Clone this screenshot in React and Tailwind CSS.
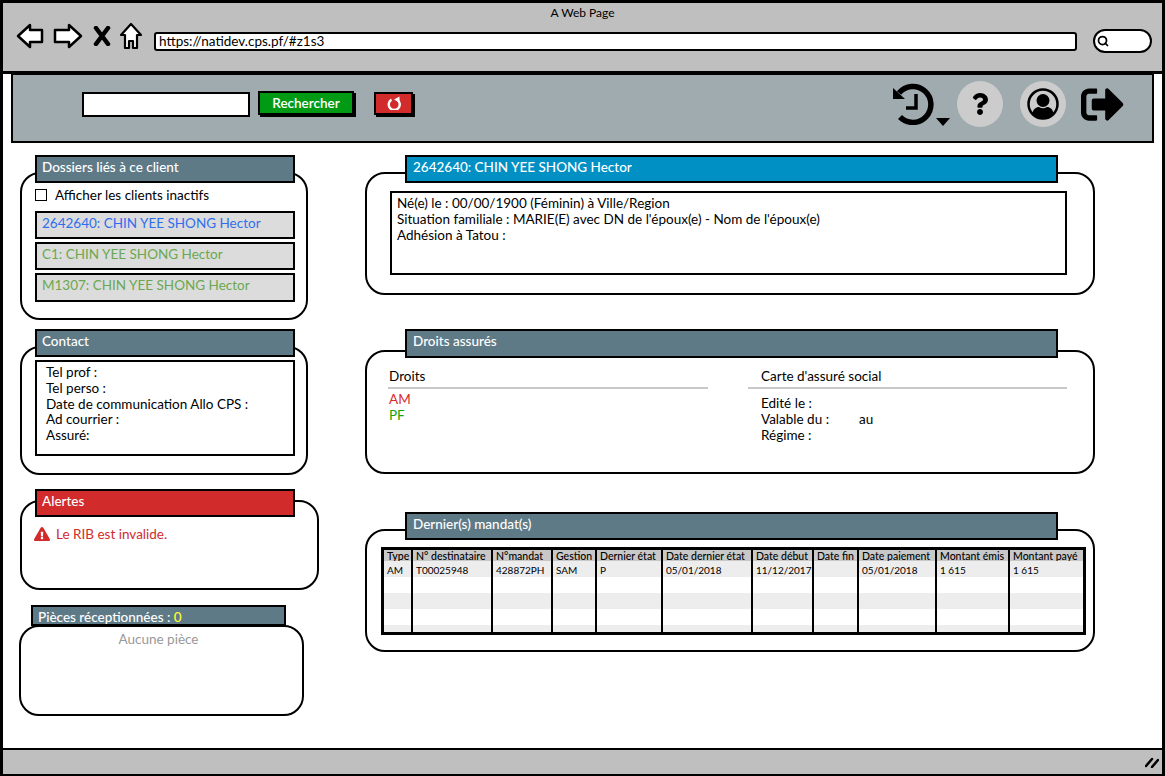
import React from 'react';
import { Search } from 'lucide-react';
import { FaQuestion, FaSignOutAlt, FaExclamationTriangle } from 'react-icons/fa';

const columns = [
  { label: 'Type', width: 'w-[28px]', value: 'AM' },
  { label: 'N° destinataire', width: 'w-[80px]', value: 'T00025948' },
  { label: 'N°mandat', width: 'w-[60px]', value: '428872PH' },
  { label: 'Gestion', width: 'w-[44px]', value: 'SAM' },
  { label: 'Dernier état', width: 'w-[66px]', value: 'P' },
  { label: 'Date dernier état', width: 'w-[90px]', value: '05/01/2018' },
  { label: 'Date début', width: 'w-[61px]', value: '11/12/2017' },
  { label: 'Date fin', width: 'w-[45px]', value: '' },
  { label: 'Date paiement', width: 'w-[78px]', value: '05/01/2018' },
  { label: 'Montant émis', width: 'w-[73px]', value: '1 615' },
  { label: 'Montant payé', width: 'w-[74px]', value: '1 615' },
];

// Header bar sitting over the top edge of a rounded panel
const PanelHeader = ({ className, children }) => (
  <div className={`relative z-10 flex items-center border-2 border-black text-white text-[13.5px] font-medium ${className}`}>
    {children}
  </div>
);

const Panel = ({ className, children }) => (
  <div className={`rounded-[20px] border-2 border-black bg-white ${className}`}>{children}</div>
);

const BrowserBar = () => (
  <div className="h-[71px] shrink-0 bg-[#bfbfbf] border-b-[3px] border-black flex flex-col">
    <div className="h-[19px] pt-[2px] text-center text-[12px] leading-[16px] text-black">A Web Page</div>
    <div className="flex items-center pl-[13px]">
      <div className="flex items-center pb-[10px]">
        <svg width="28" height="26" viewBox="0 0 28 26" className="mr-[9px]">
          <path d="M2 13 L14 2 L14 7 L26 7 L26 19 L14 19 L14 24 Z" fill="#fff" stroke="#000" strokeWidth="2.5" strokeLinejoin="round" />
        </svg>
        <svg width="30" height="26" viewBox="0 0 30 26" className="mr-[10px]">
          <path d="M28 13 L16 2 L16 7 L2 7 L2 19 L16 19 L16 24 Z" fill="#fff" stroke="#000" strokeWidth="2.5" strokeLinejoin="round" />
        </svg>
        <svg width="18" height="20" viewBox="0 0 18 20" className="mr-[8px]">
          <path d="M3 2 L15 18 M15 2 L3 18" fill="none" stroke="#000" strokeWidth="4.5" strokeLinecap="round" />
        </svg>
        <svg width="24" height="28" viewBox="0 0 24 28" className="mr-[11px]">
          <path d="M12 2 L22 13 L18 13 L18 26 L14 26 L14 19 L10 19 L10 26 L6 26 L6 13 L2 13 Z" fill="#fff" stroke="#000" strokeWidth="2.2" strokeLinejoin="round" />
        </svg>
      </div>
      <div className="w-[923px] h-[19px] bg-white border-2 border-black rounded-[3px] pl-[3px] text-[13.5px] leading-[15px] text-black">
        https://natidev.cps.pf/#z1s3
      </div>
      <div className="ml-[16px] w-[59px] h-[24px] bg-white border-2 border-black rounded-full flex items-center pl-[2px]">
        <Search className="w-[12px] h-[12px] text-black" strokeWidth={3.5} />
      </div>
    </div>
  </div>
);

const HistoryIcon = () => (
  <svg width="42" height="42" viewBox="0 0 42 42" className="mt-[2px] ml-[1px]">
    <path d="M6 10 A18 18 0 1 1 7 34" fill="none" stroke="#000" strokeWidth="5.5" />
    <path d="M0 5 L0 16 L12 16 Z" fill="#000" />
    <path d="M23 11 V25 H13" fill="none" stroke="#000" strokeWidth="3.5" />
  </svg>
);

const UserIcon = () => (
  <svg width="32" height="32" viewBox="0 0 32 32">
    <circle cx="16" cy="16" r="14.5" fill="none" stroke="#000" strokeWidth="2.5" />
    <circle cx="16" cy="12.5" r="6.5" fill="#000" />
    <path d="M5.5 26 C6 21 9 19 12 19 Q16 21.5 20 19 C23 19 26 21 26.5 26 A14 14 0 0 1 5.5 26 Z" fill="#000" />
  </svg>
);

const UndoIcon = () => (
  <svg width="14" height="14" viewBox="0 0 14 14">
    <path d="M4.5 3.6 A5.5 5.5 0 1 0 10 3.6" fill="none" stroke="#fff" strokeWidth="2.4" />
    <path d="M12.5 0.5 L12.5 6.5 L7 3.5 Z" fill="#fff" />
  </svg>
);

const Toolbar = () => (
  <div className="mx-[8px] h-[69px] shrink-0 bg-[#a0abb0] border-2 border-t-[1px] border-black flex items-center pl-[69px] pr-[28px] pb-[8px]">
    <div className="w-[168px] h-[25px] bg-white border-2 border-black" />
    <button className="ml-[8px] mb-[2px] w-[96px] h-[24px] bg-[#009a14] border-2 border-black shadow-[2px_2px_0_#000] text-white text-[13.5px] font-semibold">
      Rechercher
    </button>
    <button className="ml-[20px] mb-[2px] w-[39px] h-[23px] bg-[#d12b2b] border-2 border-black shadow-[2px_2px_0_#000] flex items-center justify-center">
      <UndoIcon />
    </button>
    <div className="ml-auto flex items-center">
      <div className="relative w-[65px] h-[46px] flex items-start">
        <HistoryIcon />
        <div className="absolute right-[7px] bottom-[1px] w-0 h-0 border-x-[7px] border-x-transparent border-t-[8px] border-t-black" />
      </div>
      <div className="w-[46px] h-[46px] rounded-full bg-[#cccccc] flex items-center justify-center">
        <FaQuestion className="w-[22px] h-[22px] text-black" />
      </div>
      <div className="ml-[17px] w-[46px] h-[46px] rounded-full bg-[#cccccc] flex items-center justify-center">
        <UserIcon />
      </div>
      <FaSignOutAlt className="ml-[15px] w-[43px] h-[43px] text-black" />
    </div>
  </div>
);

const LeftColumn = () => (
  <div className="w-[300px] shrink-0 ml-[17px] pt-[12px] flex flex-col text-[13.5px] leading-[16px] text-black">
    <PanelHeader className="ml-[15px] w-[260px] h-[28px] bg-[#5f7a87] pl-[5px] pb-[4px]">Dossiers liés à ce client</PanelHeader>
    <Panel className="-mt-[11px] w-[288px] h-[148px] pt-[9px] pl-[13px]">
      <label className="flex items-center h-[24px]">
        <span className="w-[12px] h-[12px] border border-black bg-white" />
        <span className="ml-[8px]">Afficher les clients inactifs</span>
      </label>
      <div className="mt-[4px] flex flex-col gap-[3px] w-[260px]">
        <div className="h-[28px] bg-[#dcdcdc] border-2 border-black pl-[5px] leading-[20px] text-[#2f6fed]">2642640: CHIN YEE SHONG Hector</div>
        <div className="h-[28px] bg-[#dcdcdc] border-2 border-black pl-[5px] leading-[20px] text-[#6aa84f]">C1: CHIN YEE SHONG Hector</div>
        <div className="h-[29px] bg-[#dcdcdc] border-2 border-black pl-[5px] leading-[20px] text-[#6aa84f]">M1307: CHIN YEE SHONG Hector</div>
      </div>
    </Panel>

    <PanelHeader className="mt-[9px] ml-[15px] w-[260px] h-[28px] bg-[#5f7a87] pl-[5px] pb-[4px]">Contact</PanelHeader>
    <Panel className="-mt-[11px] w-[288px] h-[129px] pt-[12px] pl-[13px]">
      <div className="w-[260px] h-[96px] border-2 border-black pl-[9px] pt-[3px] leading-[15.75px]">
        <div>Tel prof :</div>
        <div>Tel perso :</div>
        <div>Date de communication Allo CPS :</div>
        <div>Ad courrier :</div>
        <div>Assuré:</div>
      </div>
    </Panel>

    <PanelHeader className="mt-[14px] ml-[15px] w-[260px] h-[28px] bg-[#d12b2b] pl-[5px] pb-[4px]">Alertes</PanelHeader>
    <Panel className="-mt-[17px] w-[299px] h-[90px] pt-[24px] pl-[12px]">
      <div className="flex items-center text-[#d12b2b]">
        <FaExclamationTriangle className="w-[16px] h-[16px]" />
        <span className="ml-[6px]">Le RIB est invalide.</span>
      </div>
    </Panel>

    <PanelHeader className="mt-[15px] ml-[11px] w-[255px] h-[21px] bg-[#5f7a87] pl-[5px] pt-[2px]">
      <span>Pièces réceptionnées : <span className="text-[#ffff33]">0</span></span>
    </PanelHeader>
    <Panel className="-mt-[1px] -ml-[1px] w-[285px] h-[91px] pt-[4px] text-center pr-[6px] text-[#999999]">Aucune pièce</Panel>
  </div>
);

const InfoTable = () => (
  <div className="mx-[14px] mt-[16px] w-[705px] h-[88px] border-[3px] border-black overflow-hidden">
    <table className="table-fixed border-collapse w-[699px] text-[10px] text-black">
      <thead>
        <tr className="bg-[#c8c8c8] h-[11px]">
          {columns.map((col) => (
            <th key={col.label} className={`${col.width} p-0 pl-[3px] pt-[1px] text-[10.5px] font-medium text-left whitespace-nowrap overflow-hidden border-l-2 first:border-l-0 border-black leading-[10px]`}>
              {col.label}
            </th>
          ))}
        </tr>
      </thead>
      <tbody>
        <tr className="bg-[#ededed] h-[16px]">
          {columns.map((col) => (
            <td key={col.label} className="pl-[3px] pt-[2px] leading-[14px] border-l-2 first:border-l-0 border-black whitespace-nowrap">{col.value}</td>
          ))}
        </tr>
        {['bg-white', 'bg-[#ededed]', 'bg-white', 'bg-[#ededed]'].map((bg, i) => (
          <tr key={i} className={`${bg} h-[16px]`}>
            {columns.map((col) => (
              <td key={col.label} className="border-l-2 first:border-l-0 border-black" />
            ))}
          </tr>
        ))}
      </tbody>
    </table>
  </div>
);

const RightColumn = () => (
  <div className="w-[730px] ml-[45px] pt-[12px] flex flex-col text-[13.5px] leading-[16px] text-black">
    <PanelHeader className="ml-[40px] w-[653px] h-[28px] bg-[#0090c4] pl-[6px] pb-[4px]">2642640: CHIN YEE SHONG Hector</PanelHeader>
    <Panel className="-mt-[11px] h-[123px] pt-[17px] pl-[23px]">
      <div className="w-[677px] h-[84px] border-2 border-black pl-[5px] pt-[2px]">
        <div>Né(e) le : 00/00/1900 (Féminin) à Ville/Region</div>
        <div>Situation familiale : MARIE(E) avec DN de l'époux(e) - Nom de l'époux(e)</div>
        <div>Adhésion à Tatou :</div>
      </div>
    </Panel>

    <PanelHeader className="mt-[34px] ml-[40px] w-[653px] h-[29px] bg-[#5f7a87] pl-[6px] pb-[6px]">Droits assurés</PanelHeader>
    <Panel className="-mt-[8px] h-[124px] pt-[16px] flex">
      <div className="ml-[21px] w-[320px]">
        <div className="pl-[1px] pb-[3px] border-b-2 border-[#c8c8c8]">Droits</div>
        <div className="mt-[2px] pl-[1px] text-[#d92b2b]">AM</div>
        <div className="pl-[1px] text-[#0fa50f]">PF</div>
      </div>
      <div className="ml-[40px] w-[319px]">
        <div className="pl-[13px] pb-[3px] border-b-2 border-[#c8c8c8]">Carte d'assuré social</div>
        <div className="mt-[6px] pl-[13px]">Edité le :</div>
        <div className="pl-[13px] flex"><span className="w-[98px]">Valable du :</span><span>au</span></div>
        <div className="pl-[13px]">Régime :</div>
      </div>
    </Panel>

    <PanelHeader className="mt-[38px] ml-[40px] w-[653px] h-[28px] bg-[#5f7a87] pl-[6px] pb-[4px]">Dernier(s) mandat(s)</PanelHeader>
    <Panel className="-mt-[11px] h-[123px] pt-0">
      <InfoTable />
    </Panel>
  </div>
);

export default function App() {
  return (
    <div className="w-[1165px] h-[776px] flex flex-col bg-white border-[3px] border-b-0 border-black overflow-hidden font-['Lato',sans-serif]">
      <BrowserBar />
      <Toolbar />
      <div className="flex-1 flex min-h-0">
        <LeftColumn />
        <RightColumn />
      </div>
      <div className="h-[28px] shrink-0 bg-[#bfbfbf] border-y-2 border-black flex items-center justify-end pr-[3px]">
        <svg width="14" height="12" viewBox="0 0 14 12">
          <path d="M1 10 L7 3 M7 11 L13 4" stroke="#000" strokeWidth="2.5" strokeLinecap="round" />
        </svg>
      </div>
    </div>
  );
}
